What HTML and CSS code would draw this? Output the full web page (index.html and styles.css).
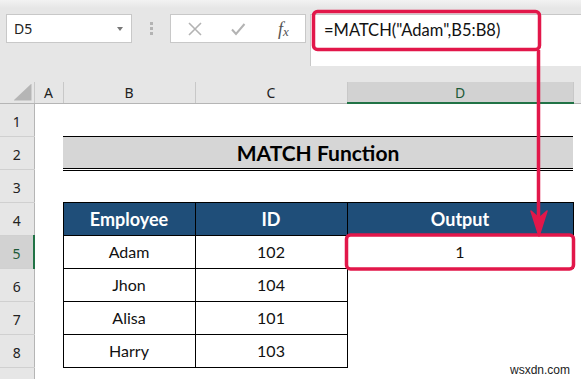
FILE: index.html
```html
<!DOCTYPE html>
<html lang="en">
<head>
  <meta charset="UTF-8" />
  <meta name="viewport" content="width=device-width, initial-scale=1.0" />
  <title>MATCH Function</title>
  <link rel="stylesheet" href="styles.css">
</head>
<body>
  <div class="window">
    <div class="topbar">
      <div class="namebox">
        <span>D5</span>
        <span class="drop"></span>
      </div>
      <div class="grip"><i></i><i></i><i></i></div>
      <div class="buttons">
        <svg class="btn" width="16" height="16" viewBox="0 0 16 16"><path d="M2 2 L14 14 M14 2 L2 14" stroke="#b3b3b3" stroke-width="1.6" fill="none"/></svg>
        <svg class="btn" width="16" height="16" viewBox="0 0 16 16"><path d="M2 8.5 L6 13 L14.5 3" stroke="#b3b3b3" stroke-width="2" fill="none"/></svg>
        <span class="fx">f<sub>x</sub></span>
      </div>
      <div class="formula">=MATCH("Adam",B5:B8)</div>
    </div>

    <table class="sheet">
      <colgroup>
        <col class="c-rh"><col class="c-a"><col class="c-b"><col class="c-c"><col class="c-d"><col class="c-e">
      </colgroup>
      <tr class="colhead">
        <th class="corner"><span class="tri"></span></th>
        <th>A</th><th>B</th><th>C</th><th class="sel">D</th><th></th>
      </tr>
      <tr><th class="rh">1</th><td></td><td></td><td></td><td></td><td></td></tr>
      <tr>
        <th class="rh">2</th><td></td>
        <td class="title" colspan="3">MATCH Function</td>
        <td></td>
      </tr>
      <tr><th class="rh">3</th><td></td><td></td><td></td><td></td><td></td></tr>
      <tr>
        <th class="rh">4</th><td></td>
        <td class="hd">Employee</td><td class="hd">ID</td><td class="hd">Output</td><td></td>
      </tr>
      <tr>
        <th class="rh sel">5</th><td></td>
        <td class="cell">Adam</td><td class="cell">102</td><td class="cell out">1</td><td></td>
      </tr>
      <tr>
        <th class="rh">6</th><td></td>
        <td class="cell">Jhon</td><td class="cell">104</td><td></td><td></td>
      </tr>
      <tr>
        <th class="rh">7</th><td></td>
        <td class="cell">Alisa</td><td class="cell">101</td><td></td><td></td>
      </tr>
      <tr>
        <th class="rh">8</th><td></td>
        <td class="cell">Harry</td><td class="cell">103</td><td></td><td></td>
      </tr>
      <tr><th class="rh"></th><td></td><td></td><td></td><td></td><td></td></tr>
    </table>

    <svg class="marks" width="581" height="379" viewBox="0 0 581 379">
      <rect x="313.5" y="11.5" width="226" height="38" rx="4" fill="none" stroke="#e2174a" stroke-width="3.5"/>
      <line x1="538.5" y1="50" x2="538.5" y2="222" stroke="#e2174a" stroke-width="3.5"/>
      <path d="M531 211 L539 236 L547 211 L539 218 Z" fill="#e2174a" stroke="#e2174a" stroke-width="1.5" stroke-linejoin="round"/>
      <rect x="346.5" y="235" width="227" height="34" rx="4" fill="none" stroke="#e2174a" stroke-width="3.5"/>
    </svg>

    <div class="watermark">wsxdn.com</div>
  </div>
</body>
</html>
```

FILE: styles.css
```css
body {
  margin: 0;
  background: #ffffff;
  font-family: "Noto Sans", "Open Sans", sans-serif;
}
.window {
  position: relative;
  width: 581px;
  height: 379px;
  overflow: hidden;
}

/* top bar: name box + formula bar */
.topbar {
  height: 82px;
  box-sizing: border-box;
  padding: 14px 0 0 6px;
  background: linear-gradient(#f2f2f2 0, #e6e6e6 8px);
  display: flex;
  align-items: flex-start;
}
.namebox {
  width: 126px;
  height: 29px;
  box-sizing: border-box;
  background: #fff;
  border: 1px solid #c8c8c8;
  display: flex;
  align-items: center;
  justify-content: space-between;
  padding: 0 8px 0 7px;
  font-size: 14px;
  color: #222;
}
.drop {
  width: 0;
  height: 0;
  border-left: 3.5px solid transparent;
  border-right: 3.5px solid transparent;
  border-top: 4px solid #777;
}
.grip {
  width: 38px;
  height: 29px;
  display: flex;
  flex-direction: column;
  align-items: center;
  justify-content: center;
  gap: 2px;
}
.grip i {
  width: 3px;
  height: 3px;
  background: #b3b3b3;
}
.buttons {
  width: 136px;
  height: 29px;
  box-sizing: border-box;
  background: #fff;
  border: 1px solid #c8c8c8;
  display: flex;
  align-items: center;
  padding-left: 16px;
  gap: 27px;
}
.fx {
  font-family: "Liberation Serif", serif;
  font-style: italic;
  font-size: 18px;
  color: #555;
  margin-left: 5px;
  line-height: 1;
}
.fx sub {
  font-size: 13px;
  vertical-align: -1px;
}
.formula {
  flex: 1;
  margin-left: 4px;
  height: 52px;
  box-sizing: border-box;
  background: #fff;
  border-left: 1px solid #c8c8c8;
  border-top: 1px solid #c8c8c8;
  padding: 5px 0 0 13px;
  font-family: "Lato", sans-serif;
  font-size: 16.5px;
  color: #111;
}

/* worksheet */
.sheet {
  width: 581px;
  table-layout: fixed;
  border-collapse: collapse;
}
.c-rh { width: 34px; }
.c-a { width: 29px; }
.c-b { width: 132px; }
.c-c { width: 152px; }
.c-d { width: 226px; }
.c-e { width: 8px; }
.sheet tr { height: 33px; }
.sheet tr.colhead { height: 21px; }
.sheet th {
  background: #e6e6e6;
  font-weight: normal;
  font-size: 14px;
  color: #222;
  padding: 0;
}
.colhead th {
  border-right: 1px solid #c8c8c8;
  border-bottom: 1px solid #b5b5b5;
  padding-top: 1px;
}
.colhead th.sel {
  background: #d2d2d2;
  border-bottom: 2px solid #217346;
  color: #1d5a38;
}
.corner {
  position: relative;
}
.tri {
  position: absolute;
  right: 2px;
  bottom: 2px;
  width: 18px;
  height: 17px;
  background: #b5b5b5;
  clip-path: polygon(100% 0, 100% 100%, 0 100%);
}
.rh {
  border-right: 1px solid #b5b5b5;
  border-bottom: 1px solid #d0d0d0;
  padding-top: 4px !important;
}
.rh.sel {
  background: #d2d2d2;
  border-right: 2px solid #217346;
  color: #1d5a38;
}
.sheet td {
  padding: 0;
  text-align: center;
  font-family: "Lato", sans-serif;
  font-size: 16px;
  color: #111;
}
.sheet td.title {
  background: #d6d6d6;
  border-top: 1px solid #000;
  border-bottom: 3px double #000;
  font-weight: bold;
  font-size: 21px;
  color: #000;
}
.sheet td.hd {
  background: #1f4e79;
  border: 1px solid #000;
  color: #fff;
  font-weight: bold;
  font-size: 18px;
}
.sheet td.cell {
  border: 1px solid #000;
}

/* annotation overlay */
.marks {
  position: absolute;
  left: 0;
  top: 0;
  pointer-events: none;
}
.watermark {
  position: absolute;
  right: 11px;
  bottom: 2px;
  font-family: "Liberation Sans", sans-serif;
  font-size: 12px;
  color: #222;
}
```
